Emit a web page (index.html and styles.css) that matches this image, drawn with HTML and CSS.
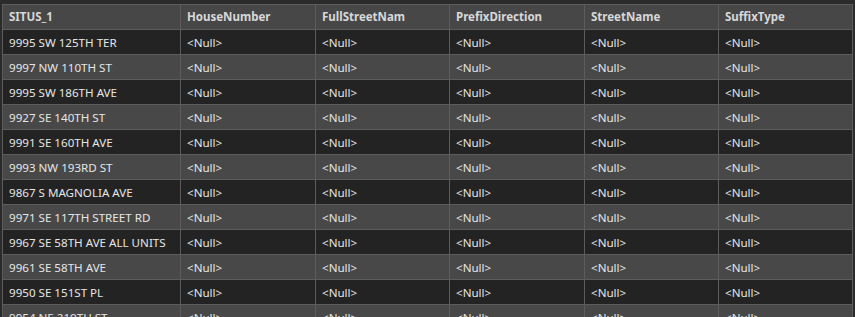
FILE: index.html
```html
<!DOCTYPE html>
<html>
<head>
<meta charset="utf-8">
<link rel="stylesheet" href="styles.css">
</head>
<body>
<div class="wrap">
  <div class="grid">
    <div class="cell head">SITUS_1</div><div class="cell head">HouseNumber</div><div class="cell head">FullStreetNam</div><div class="cell head">PrefixDirection</div><div class="cell head">StreetName</div><div class="cell head">SuffixType</div>

    <div class="cell dark">9995 SW 125TH TER</div><div class="cell dark">&lt;Null&gt;</div><div class="cell dark">&lt;Null&gt;</div><div class="cell dark">&lt;Null&gt;</div><div class="cell dark">&lt;Null&gt;</div><div class="cell dark">&lt;Null&gt;</div>
    <div class="cell light">9997 NW 110TH ST</div><div class="cell light">&lt;Null&gt;</div><div class="cell light">&lt;Null&gt;</div><div class="cell light">&lt;Null&gt;</div><div class="cell light">&lt;Null&gt;</div><div class="cell light">&lt;Null&gt;</div>
    <div class="cell dark">9995 SW 186TH AVE</div><div class="cell dark">&lt;Null&gt;</div><div class="cell dark">&lt;Null&gt;</div><div class="cell dark">&lt;Null&gt;</div><div class="cell dark">&lt;Null&gt;</div><div class="cell dark">&lt;Null&gt;</div>
    <div class="cell light">9927 SE 140TH ST</div><div class="cell light">&lt;Null&gt;</div><div class="cell light">&lt;Null&gt;</div><div class="cell light">&lt;Null&gt;</div><div class="cell light">&lt;Null&gt;</div><div class="cell light">&lt;Null&gt;</div>
    <div class="cell dark">9991 SE 160TH AVE</div><div class="cell dark">&lt;Null&gt;</div><div class="cell dark">&lt;Null&gt;</div><div class="cell dark">&lt;Null&gt;</div><div class="cell dark">&lt;Null&gt;</div><div class="cell dark">&lt;Null&gt;</div>
    <div class="cell light">9993 NW 193RD ST</div><div class="cell light">&lt;Null&gt;</div><div class="cell light">&lt;Null&gt;</div><div class="cell light">&lt;Null&gt;</div><div class="cell light">&lt;Null&gt;</div><div class="cell light">&lt;Null&gt;</div>
    <div class="cell dark">9867 S MAGNOLIA AVE</div><div class="cell dark">&lt;Null&gt;</div><div class="cell dark">&lt;Null&gt;</div><div class="cell dark">&lt;Null&gt;</div><div class="cell dark">&lt;Null&gt;</div><div class="cell dark">&lt;Null&gt;</div>
    <div class="cell light">9971 SE 117TH STREET RD</div><div class="cell light">&lt;Null&gt;</div><div class="cell light">&lt;Null&gt;</div><div class="cell light">&lt;Null&gt;</div><div class="cell light">&lt;Null&gt;</div><div class="cell light">&lt;Null&gt;</div>
    <div class="cell dark">9967 SE 58TH AVE ALL UNITS</div><div class="cell dark">&lt;Null&gt;</div><div class="cell dark">&lt;Null&gt;</div><div class="cell dark">&lt;Null&gt;</div><div class="cell dark">&lt;Null&gt;</div><div class="cell dark">&lt;Null&gt;</div>
    <div class="cell light">9961 SE 58TH AVE</div><div class="cell light">&lt;Null&gt;</div><div class="cell light">&lt;Null&gt;</div><div class="cell light">&lt;Null&gt;</div><div class="cell light">&lt;Null&gt;</div><div class="cell light">&lt;Null&gt;</div>
    <div class="cell dark">9950 SE 151ST PL</div><div class="cell dark">&lt;Null&gt;</div><div class="cell dark">&lt;Null&gt;</div><div class="cell dark">&lt;Null&gt;</div><div class="cell dark">&lt;Null&gt;</div><div class="cell dark">&lt;Null&gt;</div>
    <div class="cell light">9954 NE 210TH ST</div><div class="cell light">&lt;Null&gt;</div><div class="cell light">&lt;Null&gt;</div><div class="cell light">&lt;Null&gt;</div><div class="cell light">&lt;Null&gt;</div><div class="cell light">&lt;Null&gt;</div>
  </div>
</div>
</body>
</html>
```

FILE: styles.css
```css
html, body {
  margin: 0;
  padding: 0;
  background: #2b2b2b;
  height: 317px;
  overflow: hidden;
}
.wrap {
  padding: 4px 0 0 2px;
}
.grid {
  display: grid;
  grid-template-columns: 177px 134px 133px 134px 133px 133px;
  grid-auto-rows: 24px;
  gap: 1px;
  padding: 1px;
  width: max-content;
  background: #5c5c5c;
  font-family: "Noto Sans", "Open Sans", sans-serif;
  font-size: 11.6px;
}
.cell {
  padding-left: 6px;
  line-height: 25px;
  white-space: nowrap;
  overflow: hidden;
  color: #e6e6e6;
}
.head {
  background: #474747;
  font-weight: bold;
  font-size: 11.5px;
  line-height: 24px;
  color: #d8d8d8;
}
.dark {
  background: #232323;
}
.light {
  background: #484848;
}
```
